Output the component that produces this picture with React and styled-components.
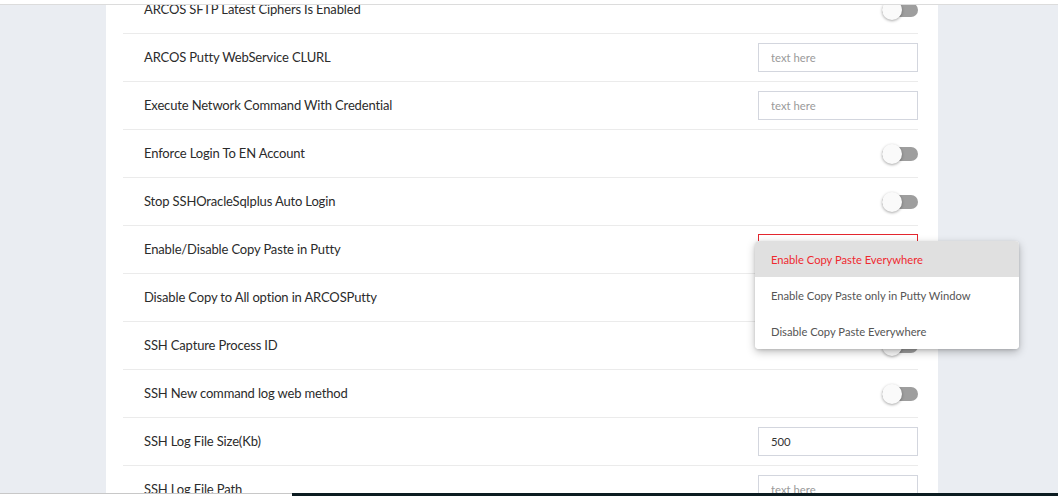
import React from 'react';
import styled, { createGlobalStyle } from 'styled-components';

const GlobalStyle = createGlobalStyle`
  html, body {
    margin: 0;
    padding: 0;
    background: #eaedf2;
    font-family: Lato, "Noto Sans", sans-serif;
  }
  * { box-sizing: border-box; }
`;

const settings = [
  { label: 'ARCOS SFTP Latest Ciphers Is Enabled', type: 'toggle' },
  { label: 'ARCOS Putty WebService CLURL', type: 'input' },
  { label: 'Execute Network Command With Credential', type: 'input' },
  { label: 'Enforce Login To EN Account', type: 'toggle' },
  { label: 'Stop SSHOracleSqlplus Auto Login', type: 'toggle' },
  { label: 'Enable/Disable Copy Paste in Putty', type: 'select' },
  { label: 'Disable Copy to All option in ARCOSPutty', type: 'toggle' },
  { label: 'SSH Capture Process ID', type: 'toggle' },
  { label: 'SSH New command log web method', type: 'toggle' },
  { label: 'SSH Log File Size(Kb)', type: 'input', value: '500' },
  { label: 'SSH Log File Path', type: 'input' },
];

const options = [
  'Enable Copy Paste Everywhere',
  'Enable Copy Paste only in Putty Window',
  'Disable Copy Paste Everywhere',
];

const App = () => {
  return (
    <Screen>
      <GlobalStyle />
      <TopBar />
      <Main>
        <Card>
          <List>
            {settings.map((s) => (
              <Row key={s.label}>
                <Label>{s.label}</Label>
                <Control>
                  {s.type === 'toggle' && (
                    <Switch>
                      <Knob />
                    </Switch>
                  )}
                  {s.type === 'input' && (
                    <TextInput
                      placeholder="text here"
                      defaultValue={s.value || ''}
                      readOnly
                    />
                  )}
                  {s.type === 'select' && (
                    <>
                      <SelectBox />
                      <Menu>
                        {options.map((o, i) => (
                          <MenuItem key={o} active={i === 0}>
                            {o}
                          </MenuItem>
                        ))}
                      </Menu>
                    </>
                  )}
                </Control>
              </Row>
            ))}
          </List>
        </Card>
      </Main>
      <BottomBar>
        <ScrollTrack />
        <Taskbar />
      </BottomBar>
    </Screen>
  );
};

// Styles
const Screen = styled.div`
  width: 1058px;
  height: 496px;
  display: flex;
  flex-direction: column;
  overflow: hidden;
  background: #eaedf2;
`;

const TopBar = styled.div`
  height: 5px;
  flex-shrink: 0;
  background: #fff;
  border-bottom: 1px solid #dcdcdc;
`;

const Main = styled.div`
  flex: 1;
  overflow: hidden;
  padding-left: 106px;
`;

const Card = styled.div`
  width: 832px;
  min-height: 100%;
  background: #fff;
  padding: 0 20px 0 17px;
`;

const List = styled.div`
  margin-top: -19px;
`;

const Row = styled.div`
  height: 48px;
  display: flex;
  align-items: center;
  justify-content: space-between;
  padding-left: 21px;
  border-bottom: 1px solid #ebebeb;
`;

const Label = styled.span`
  font-size: 13px;
  letter-spacing: -0.15px;
  color: #2b2b2b;
  padding-bottom: 2px;
`;

const Control = styled.div`
  position: relative;
  display: flex;
  align-items: center;
  justify-content: flex-end;
  width: 160px;
`;

const Switch = styled.div`
  position: relative;
  width: 36px;
  height: 14px;
  border-radius: 7px;
  background: #9e9e9e;
`;

const Knob = styled.div`
  position: absolute;
  left: 0;
  top: -3px;
  width: 20px;
  height: 20px;
  border-radius: 50%;
  background: #fafafa;
  box-shadow: 0 1px 3px rgba(0, 0, 0, 0.35);
`;

const TextInput = styled.input`
  width: 160px;
  height: 29px;
  border: 1px solid #d3d6de;
  border-radius: 0;
  padding: 0 12px;
  font-family: inherit;
  font-size: 11.3px;
  color: #333;
  outline: none;
  &::placeholder {
    color: #9a9a9a;
  }
`;

const SelectBox = styled.div`
  width: 160px;
  height: 29px;
  margin-top: -2px;
  border: 1px solid #e3262e;
  background: #fff;
`;

const Menu = styled.div`
  position: absolute;
  left: -3px;
  top: 5px;
  width: 264px;
  background: #fff;
  border-radius: 4px;
  overflow: hidden;
  box-shadow: 0 3px 8px rgba(0, 0, 0, 0.25), 0 1px 3px rgba(0, 0, 0, 0.12);
  z-index: 2;
`;

const MenuItem = styled.div`
  height: 36px;
  display: flex;
  align-items: center;
  padding-left: 16px;
  font-size: 11.2px;
  white-space: nowrap;
  color: ${(props) => (props.active ? '#ef2a30' : '#555')};
  background: ${(props) => (props.active ? '#e0e0e0' : '#fff')};
`;

const BottomBar = styled.div`
  height: 3px;
  flex-shrink: 0;
  display: flex;
`;

const ScrollTrack = styled.div`
  width: 292px;
  background: #fff;
  border-top: 1px solid #c8c8c8;
`;

const Taskbar = styled.div`
  flex: 1;
  background: #0c1c21;
`;

export default App;
